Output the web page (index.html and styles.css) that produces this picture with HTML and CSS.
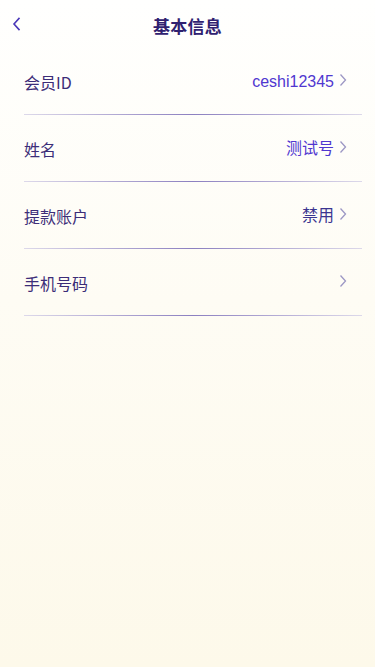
FILE: index.html
```html
<!DOCTYPE html>
<html lang="zh">
<head>
<meta charset="utf-8">
<meta name="viewport" content="width=device-width, initial-scale=1">
<title>基本信息</title>
<link rel="stylesheet" href="styles.css">
</head>
<body>
<div class="page">
  <header class="nav">
    <span class="back">
      <svg width="10" height="14" viewBox="0 0 10 14"><path d="M7 1.5 L2 7 L7 12.5" fill="none" stroke="#4a38b8" stroke-width="1.6" stroke-linecap="square"/></svg>
    </span>
    <h1 class="title">基本信息</h1>
  </header>
  <ul class="list">
    <li class="row">
      <span class="label">会员ID</span>
      <span class="value">ceshi12345</span>
      <svg class="chev" width="8" height="14" viewBox="0 0 8 14"><path d="M1.5 1.5 L6.5 7 L1.5 12.5" fill="none" stroke="#9c97c4" stroke-width="1.3"/></svg>
    </li>
    <li class="row">
      <span class="label">姓名</span>
      <span class="value">测试号</span>
      <svg class="chev" width="8" height="14" viewBox="0 0 8 14"><path d="M1.5 1.5 L6.5 7 L1.5 12.5" fill="none" stroke="#9c97c4" stroke-width="1.3"/></svg>
    </li>
    <li class="row">
      <span class="label">提款账户</span>
      <span class="value dim">禁用</span>
      <svg class="chev" width="8" height="14" viewBox="0 0 8 14"><path d="M1.5 1.5 L6.5 7 L1.5 12.5" fill="none" stroke="#9c97c4" stroke-width="1.3"/></svg>
    </li>
    <li class="row">
      <span class="label">手机号码</span>
      <span class="value"></span>
      <svg class="chev" width="8" height="14" viewBox="0 0 8 14"><path d="M1.5 1.5 L6.5 7 L1.5 12.5" fill="none" stroke="#9c97c4" stroke-width="1.3"/></svg>
    </li>
  </ul>
</div>
</body>
</html>
```
FILE: styles.css
```css
* { box-sizing: border-box; }
html, body { margin: 0; padding: 0; }
body {
  font-family: "Noto Sans CJK SC", "Liberation Sans", sans-serif;
  background: linear-gradient(180deg, #fffffe 0%, #fefcf4 45%, #fdf9ea 100%);
  min-height: 667px;
}
.page { width: 375px; min-height: 667px; }
.nav {
  height: 48px;
  display: flex;
  align-items: center;
  justify-content: center;
  position: relative;
  padding-top: 4px;
}
.back {
  position: absolute;
  left: 12px;
  top: 17px;
  display: flex;
}
.title {
  margin: 0;
  font-size: 17px;
  font-weight: 700;
  color: #2f2170;
  line-height: 24px;
  letter-spacing: 0.3px;
}
.list {
  list-style: none;
  margin: 0;
  padding: 0 13px 0 24px;
}
.row {
  display: flex;
  align-items: center;
  height: 67px;
  padding-top: 2px;
  border-bottom: 1px solid transparent;
  border-image: linear-gradient(90deg, #ddd9ea 0%, #8c80c0 50%, #ddd9ea 100%) 1;
}
.label {
  font-size: 16px;
  color: #3c2d78;
  line-height: 20px;
  flex: 1;
}
.value {
  font-family: "Liberation Sans", "Noto Sans CJK SC", sans-serif;
  font-size: 16px;
  color: #5037d0;
  line-height: 20px;
}
.value.dim { color: #3b3590; }
.chev { margin-left: 5px; margin-right: 15px; margin-top: -4px; }
```
